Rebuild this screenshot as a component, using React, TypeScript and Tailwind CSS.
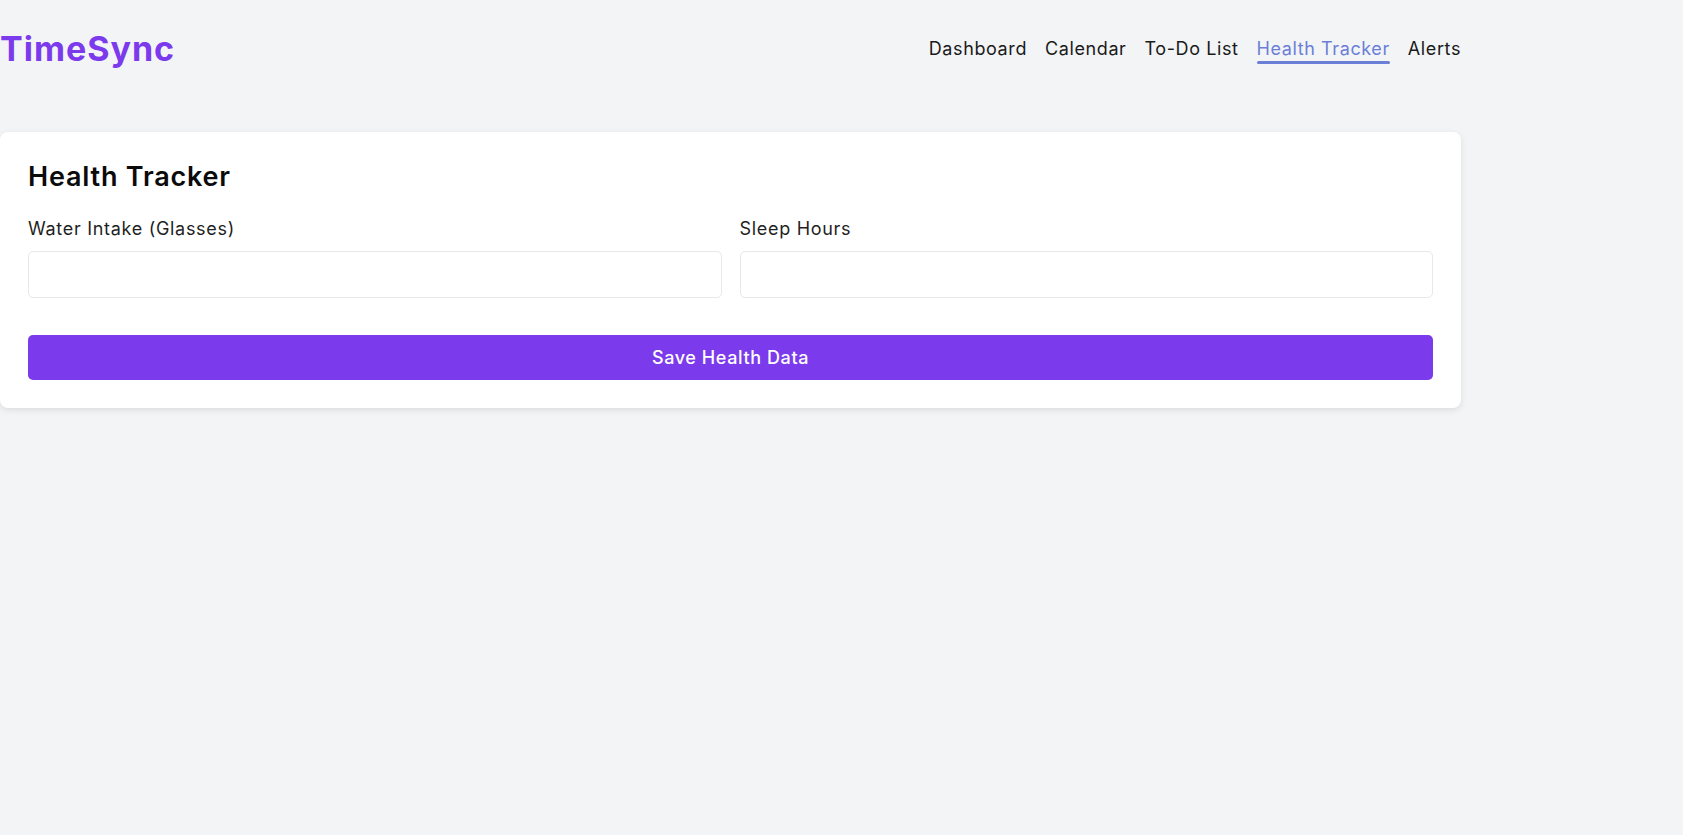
export default function App() {
  const links = ['Dashboard', 'Calendar', 'To-Do List', 'Health Tracker', 'Alerts']
  const active = 'Health Tracker'

  return (
    <div className="min-h-screen w-full bg-[#f3f4f6] font-['Inter',sans-serif] text-[#111111]">
      <div className="w-[1461px]">
        {/* Top bar */}
        <header className="flex h-[96px] items-center justify-between">
          <div className="text-[34px] font-bold tracking-[1px] text-[#7c3aed]">TimeSync</div>
          <nav className="flex items-center gap-[18px]">
            {links.map((l) =>
              l === active ? (
                <a key={l} className="relative text-[18px] leading-[27px] tracking-[0.6px] text-[#6b7fd7]">
                  {l}
                  <span className="absolute -bottom-[2px] left-0 h-[3px] w-full rounded-full bg-[#6b7fd7]" />
                </a>
              ) : (
                <a key={l} className="text-[18px] leading-[27px] tracking-[0.6px] text-[#1a1a1a]">
                  {l}
                </a>
              )
            )}
          </nav>
        </header>

        {/* Health card */}
        <section className="mt-[36px] rounded-[8px] bg-white px-[28px] pb-[28px] pt-[25px] shadow-[0_2px_6px_rgba(0,0,0,0.1)]">
          <h2 className="text-[27px] font-semibold leading-[39px] tracking-[0.8px] text-[#0b0b0b]">Health Tracker</h2>
          <div className="mt-[19px] grid grid-cols-2 gap-[18px]">
            <div>
              <label className="block text-[18px] leading-[27px] tracking-[0.7px] text-[#1f1f1f]">Water Intake (Glasses)</label>
              <input className="mt-[9px] block h-[47px] w-full rounded-[5px] border border-[#e8e8ea] bg-white px-3 outline-none" />
            </div>
            <div>
              <label className="block text-[18px] leading-[27px] tracking-[0.7px] text-[#1f1f1f]">Sleep Hours</label>
              <input className="mt-[9px] block h-[47px] w-full rounded-[5px] border border-[#e8e8ea] bg-white px-3 outline-none" />
            </div>
          </div>
          <button className="mt-[37px] block h-[45px] w-full rounded-[5px] bg-[#7c3aed] text-[18px] font-medium tracking-[0.6px] text-white">
            Save Health Data
          </button>
        </section>
      </div>
    </div>
  )
}
